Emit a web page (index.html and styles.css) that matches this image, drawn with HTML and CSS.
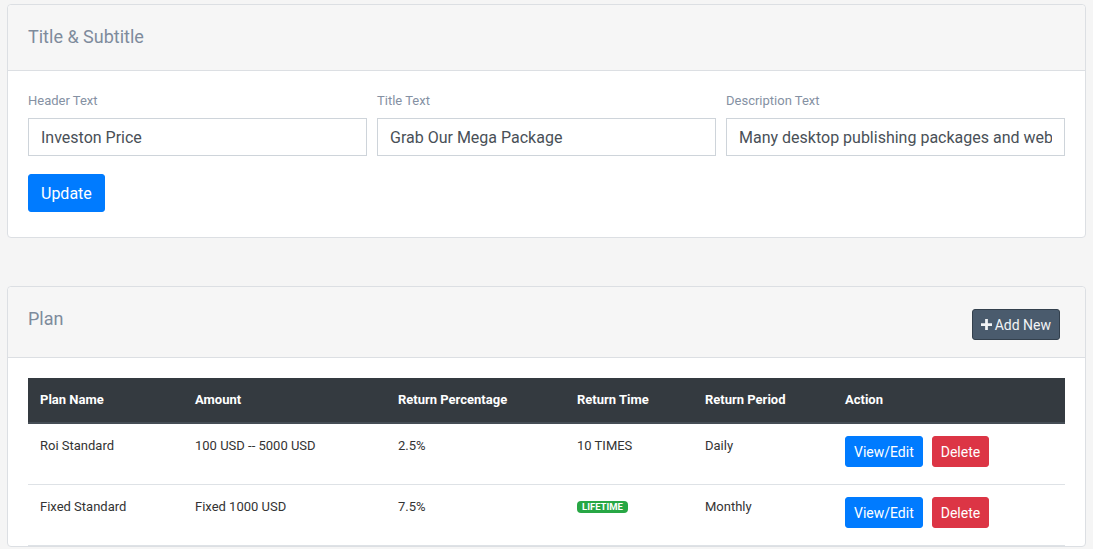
FILE: index.html
```html
<!DOCTYPE html>
<html lang="en">
<head>
<meta charset="utf-8">
<title>Settings</title>
<link rel="stylesheet" href="styles.css">
</head>
<body>
<div class="page">
  <section class="card">
    <div class="card-header">
      <h5 class="card-title">Title &amp; Subtitle</h5>
    </div>
    <div class="card-body">
      <div class="form-grid">
        <div class="field">
          <label class="label">Header Text</label>
          <input class="input" type="text" value="Investon Price">
        </div>
        <div class="field">
          <label class="label">Title Text</label>
          <input class="input" type="text" value="Grab Our Mega Package">
        </div>
        <div class="field">
          <label class="label">Description Text</label>
          <input class="input" type="text" value="Many desktop publishing packages and web page editors now use Lorem Ipsum">
        </div>
      </div>
      <button class="btn btn-primary btn-lg">Update</button>
    </div>
  </section>

  <section class="card card-plan">
    <div class="card-header header-flex">
      <h5 class="card-title">Plan</h5>
      <button class="btn btn-dark-slate">
        <svg class="plus" viewBox="0 0 12 12" width="11" height="11"><path d="M4.5 0h3v4.5H12v3H7.5V12h-3V7.5H0v-3h4.5z" fill="currentColor"/></svg>Add New
      </button>
    </div>
    <div class="card-body table-body">
      <table class="table">
        <thead>
          <tr>
            <th class="c1">Plan Name</th>
            <th class="c2">Amount</th>
            <th class="c3">Return Percentage</th>
            <th class="c4">Return Time</th>
            <th class="c5">Return Period</th>
            <th class="c6">Action</th>
          </tr>
        </thead>
        <tbody>
          <tr>
            <td>Roi Standard</td>
            <td>100 USD -- 5000 USD</td>
            <td>2.5%</td>
            <td>10 TIMES</td>
            <td>Daily</td>
            <td><div class="actions"><button class="btn btn-primary btn-sm">View/Edit</button><button class="btn btn-danger btn-sm">Delete</button></div></td>
          </tr>
          <tr>
            <td>Fixed Standard</td>
            <td>Fixed 1000 USD</td>
            <td>7.5%</td>
            <td><span class="badge">Lifetime</span></td>
            <td>Monthly</td>
            <td><div class="actions"><button class="btn btn-primary btn-sm">View/Edit</button><button class="btn btn-danger btn-sm">Delete</button></div></td>
          </tr>
        </tbody>
      </table>
    </div>
  </section>
</div>
</body>
</html>
```

FILE: styles.css
```css
* { box-sizing: border-box; }

html, body {
  margin: 0;
  padding: 0;
  background: #f5f5f5;
  font-family: Roboto, "Liberation Sans", Arial, sans-serif;
  color: #343a40;
}

.page {
  padding: 4px 7px 0 7px;
  display: flex;
  flex-direction: column;
  gap: 48px;
}

.card {
  background: #fff;
  border: 1px solid #dcdfe3;
  border-radius: 4px;
}

.card-header {
  background: #f6f6f6;
  border-bottom: 1px solid #dcdfe3;
  border-radius: 4px 4px 0 0;
  padding: 20px 20px 21px 20px;
}

.card-title {
  margin: 0;
  font-size: 18px;
  line-height: 24px;
  font-weight: 400;
  color: #7e8b9c;
}

.header-flex {
  display: flex;
  justify-content: space-between;
  align-items: flex-start;
  padding: 20px 25px 17px 20px;
}

.card-body {
  padding: 20px 20px 25px 20px;
}

.form-grid {
  display: grid;
  grid-template-columns: 1fr 1fr 1fr;
  gap: 10px;
  margin-bottom: 18px;
}

.field {
  display: flex;
  flex-direction: column;
}

.label {
  font-size: 13px;
  line-height: 19px;
  color: #8591a3;
  margin-bottom: 8px;
}

.input {
  height: 38px;
  border: 1px solid #ced4da;
  border-radius: 0;
  padding: 0 12px;
  font-family: Roboto, "Liberation Sans", Arial, sans-serif;
  font-size: 16px;
  color: #495057;
  background: #fff;
  outline: none;
  width: 100%;
}

.btn {
  font-family: Roboto, "Liberation Sans", Arial, sans-serif;
  border: 1px solid transparent;
  border-radius: 3px;
  color: #fff;
  cursor: pointer;
  display: inline-flex;
  align-items: center;
  justify-content: center;
}

.btn-primary { background: #007bff; border-color: #007bff; }
.btn-danger { background: #dc3545; border-color: #dc3545; }

.btn-lg {
  height: 38px;
  padding: 0 12px;
  font-size: 16px;
}

.btn-dark-slate {
  margin-top: 2px;
  height: 31px;
  padding: 0 8px;
  font-size: 14px;
  background: #4a5b6d;
  border-color: #33404d;
  color: #f2f4f6;
  gap: 3px;
}

.plus { display: block; }

.table-body {
  padding: 20px 20px 0 20px;
}

.table {
  width: 100%;
  border-collapse: collapse;
  table-layout: fixed;
  font-size: 13px;
}

.table th {
  background: #343a40;
  color: #fff;
  font-weight: 700;
  text-align: left;
  padding: 12px 12px 12px 12px;
  line-height: 20px;
  border-bottom: 2px solid #454d55;
}

.table .c1 { width: 155px; }
.table .c2 { width: 203px; }
.table .c3 { width: 179px; }
.table .c4 { width: 128px; }
.table .c5 { width: 140px; }

.table td {
  vertical-align: top;
  padding: 12px 12px 17px 12px;
  line-height: 19px;
  color: #333;
  border-bottom: 1px solid #dee2e6;
}

.actions {
  display: flex;
  gap: 9px;
}

.btn-sm {
  height: 31px;
  padding: 0 8px;
  font-size: 14px;
}

.badge {
  display: inline-block;
  background: #28a745;
  color: #fff;
  font-size: 9.5px;
  font-weight: 700;
  text-transform: uppercase;
  line-height: 12px;
  padding: 0 5px;
  border-radius: 4px;
  vertical-align: 1px;
}
```
